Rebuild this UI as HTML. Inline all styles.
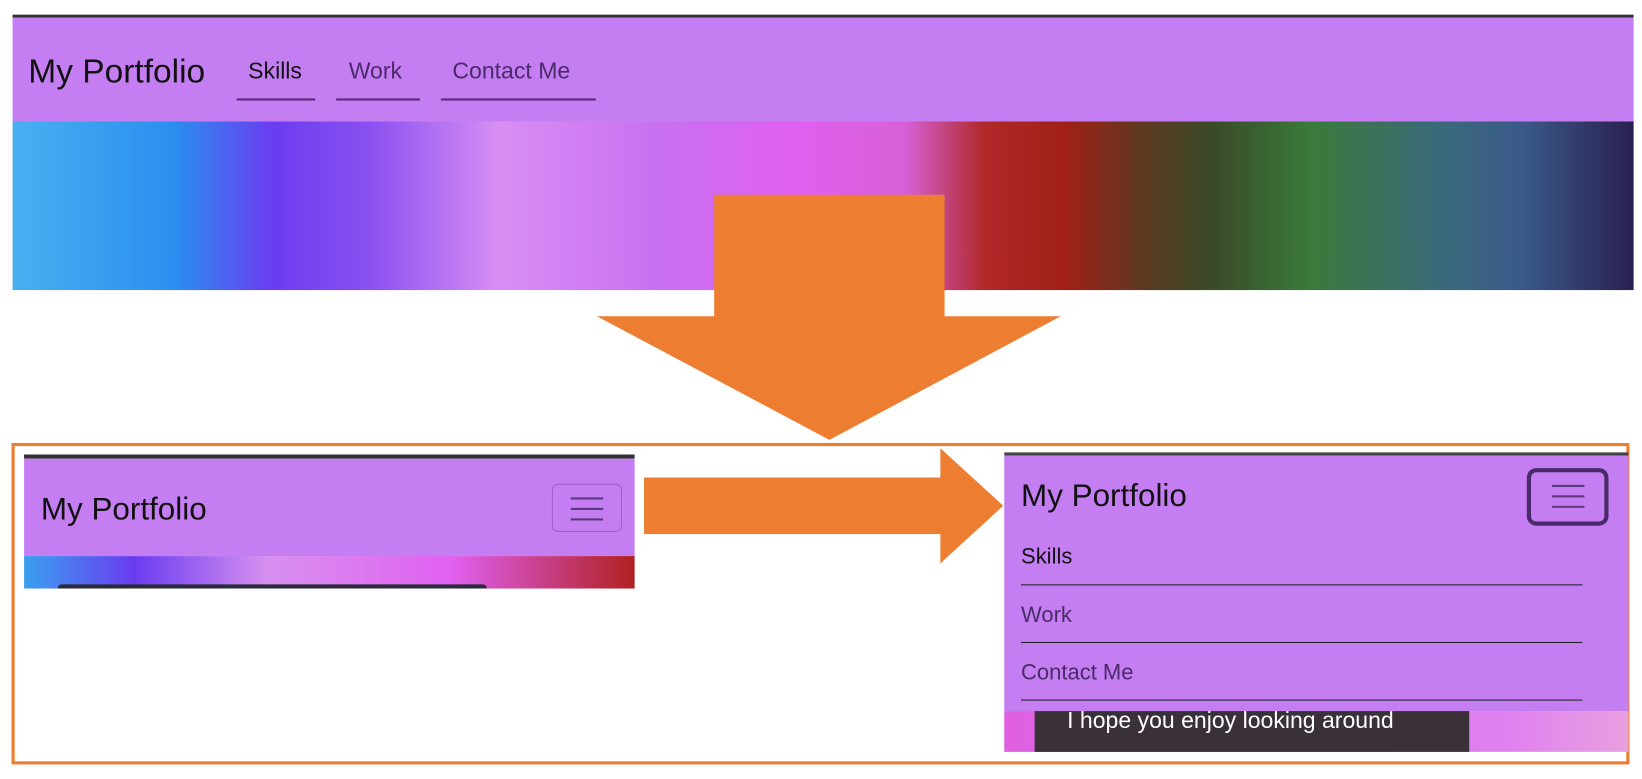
<!DOCTYPE html>
<html><head><meta charset="utf-8"><style>
*{margin:0;padding:0;box-sizing:border-box}
body{width:1642px;height:779px;background:#fff;position:relative;overflow:hidden;font-family:"Liberation Sans",sans-serif}
#w{position:absolute;left:0;top:0;width:1568px;height:744px;transform:scale(1.0472);transform-origin:0 0}
.a{position:absolute}
.purple{background:#c47ef2}
.bokeh{background:linear-gradient(90deg,#48b0f0 0%,#2a8ef0 10%,#6a3cf0 16%,#8a50f0 22%,#d88ef4 30%,#c870f0 40%,#e060f0 48%,#d860d8 55%,#b02828 60%,#a02018 65%,#5a3a20 70%,#3a4a28 74%,#3a7a3a 80%,#3a6a7a 88%,#3a5a8a 93%,#2a2050 100%)}
.t{color:#111;font-size:32px}
.n{font-size:22px;color:#4a2a6a}
.ln{border-bottom:2px solid #5a2a7a}
</style></head><body><div id="w">
<div class="a" style="left:12px;top:14px;width:1548px;height:3px;background:#333"></div>
<div class="a purple" style="left:12px;top:17px;width:1548px;height:99px"></div>
<div class="a t" style="left:27px;top:50px">My Portfolio</div>
<div class="a n" style="left:237px;top:55px;color:#111">Skills</div>
<div class="a n" style="left:333px;top:55px">Work</div>
<div class="a n" style="left:432px;top:55px">Contact Me</div>
<div class="a ln" style="left:226px;top:94px;width:75px"></div>
<div class="a ln" style="left:321px;top:94px;width:80px"></div>
<div class="a ln" style="left:421px;top:94px;width:148px"></div>
<div class="a bokeh" style="left:12px;top:116px;width:1548px;height:161px"></div>
<div class="a" style="left:682px;top:186px;width:220px;height:117px;background:#ed7d31"></div>
<svg class="a" style="left:0;top:0" width="1568" height="744"><polygon points="570,302 1013,302 792,420" fill="#ed7d31"/><polygon points="898,428 958,483 898,538" fill="#ed7d31"/></svg>
<div class="a" style="left:11px;top:423px;width:1545px;height:307px;border:3px solid #ed7d31"></div>
<div class="a" style="left:23px;top:434px;width:583px;height:4px;background:#333"></div>
<div class="a purple" style="left:23px;top:438px;width:583px;height:93px"></div>
<div class="a bokeh" style="left:23px;top:531px;width:583px;height:31px;background:linear-gradient(90deg,#3aa0f0,#6a3cf0 18%,#d890f0 40%,#e060f0 70%,#b02020 100%)"></div>
<div class="a" style="left:55px;top:558px;width:410px;height:4px;background:#2a2a3a;border-radius:4px 4px 0 0"></div>
<div class="a t" style="left:39px;top:470px;font-size:30px">My Portfolio</div>
<div class="a" style="left:527px;top:462px;width:67px;height:46px;border:1px solid #a060d0;border-radius:6px"></div>
<div class="a" style="left:545px;top:475px;width:31px;height:2px;background:#5a3a7a;box-shadow:0 10px 0 #5a3a7a,0 20px 0 #5a3a7a"></div>
<div class="a" style="left:615px;top:456px;width:284px;height:54px;background:#ed7d31"></div>
<div class="a" style="left:959px;top:432px;width:596px;height:3px;background:#444"></div>
<div class="a bokeh" style="left:959px;top:679px;width:596px;height:39px;background:linear-gradient(90deg,#e060e0,#d070e8 40%,#e080f0 80%,#e8a0e0)"></div>
<div class="a" style="left:988px;top:679px;width:415px;height:39px;background:#3a3038;color:#fff;font-size:22px;padding-left:31px;line-height:18px">I hope you enjoy looking around</div>
<div class="a purple" style="left:959px;top:435px;width:596px;height:244px"></div>
<div class="a t" style="left:975px;top:457px;font-size:30px">My Portfolio</div>
<div class="a" style="left:1458px;top:447px;width:78px;height:55px;border:4px solid #4a2a6a;border-radius:9px"></div>
<div class="a" style="left:1482px;top:463px;width:31px;height:2px;background:#5a3a7a;box-shadow:0 10px 0 #5a3a7a,0 20px 0 #5a3a7a"></div>
<div class="a n" style="left:975px;top:520px;color:#111;font-size:21px">Skills</div>
<div class="a n" style="left:975px;top:576px;font-size:21px">Work</div>
<div class="a n" style="left:975px;top:631px;font-size:21px">Contact Me</div>
<div class="a" style="left:975px;top:558px;width:536px;height:1px;background:#222"></div>
<div class="a" style="left:975px;top:613px;width:536px;height:1px;background:#222"></div>
<div class="a" style="left:975px;top:668px;width:536px;height:1px;background:#222"></div>
</div></body></html>
